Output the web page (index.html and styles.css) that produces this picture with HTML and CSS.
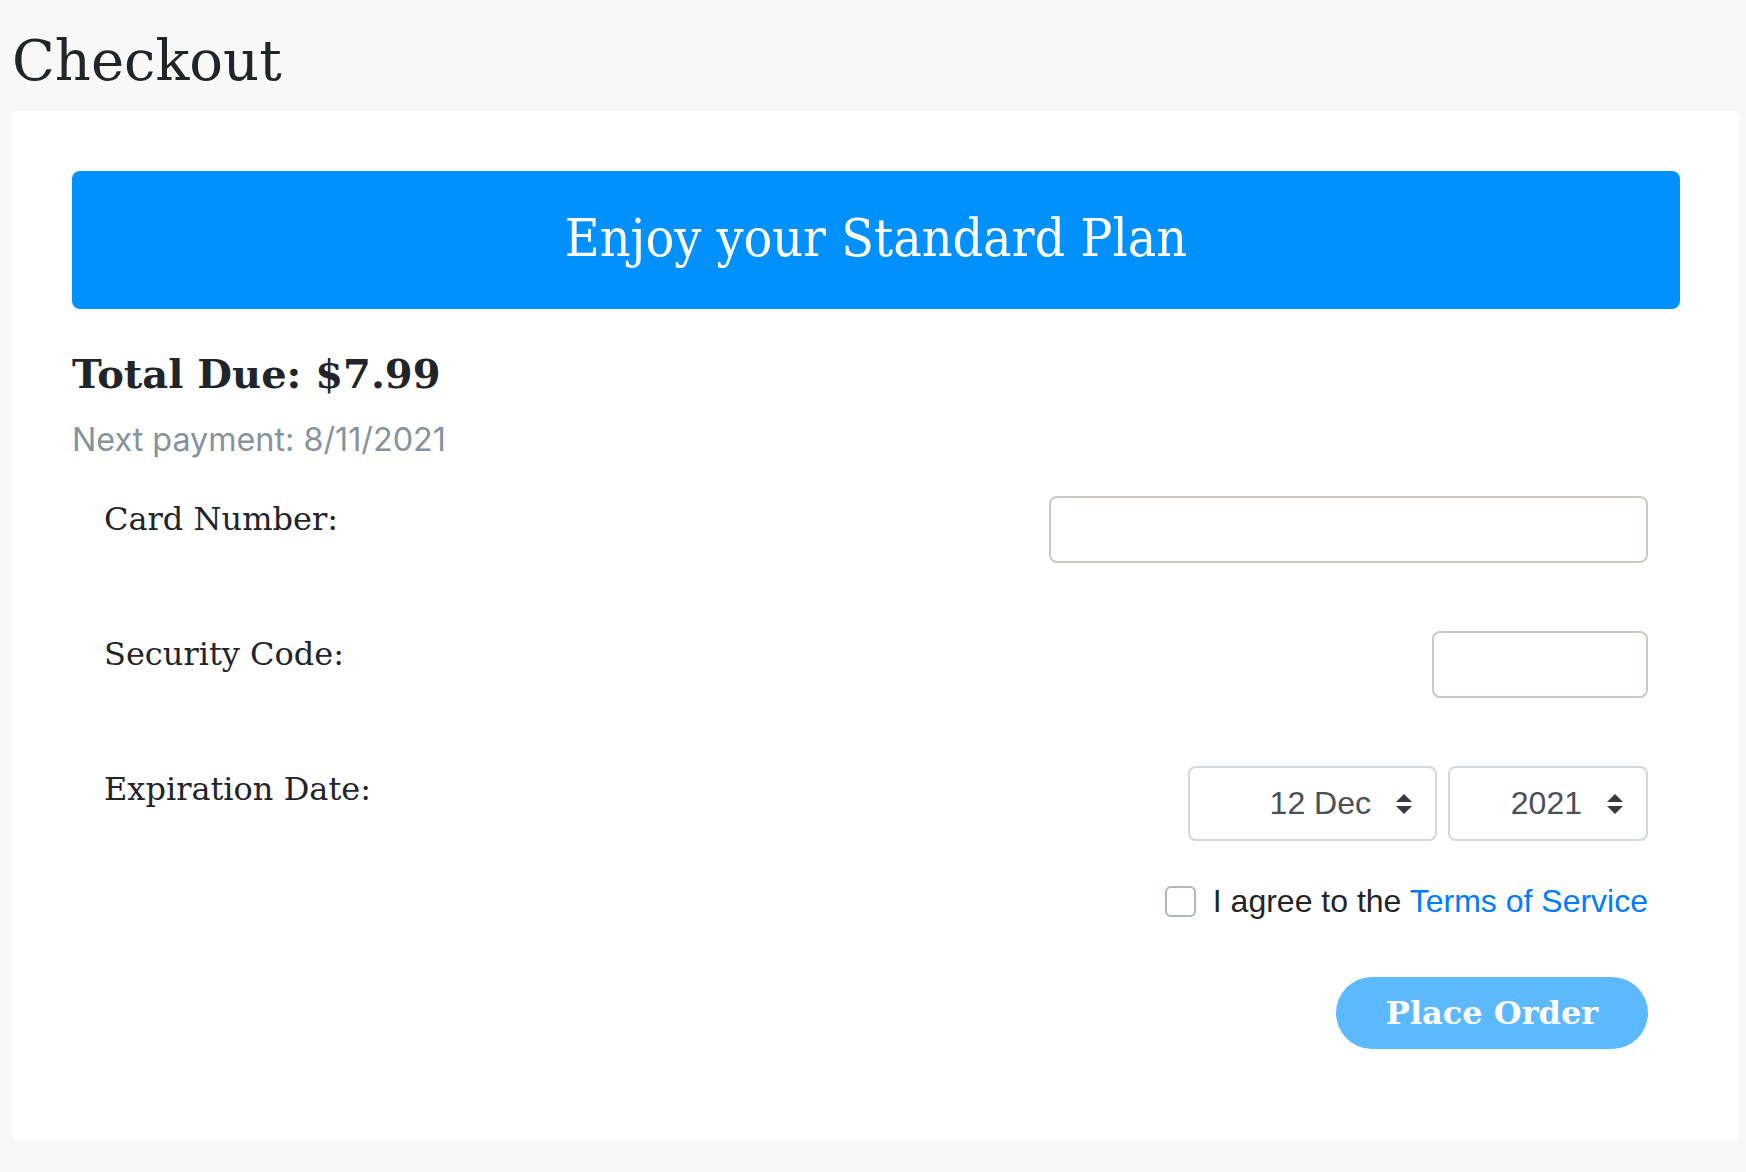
FILE: index.html
```html
<!DOCTYPE html>
<html lang="en">
<head>
<meta charset="utf-8">
<title>Checkout</title>
<link rel="stylesheet" href="styles.css">
</head>
<body>
<h1 class="page-title">Checkout</h1>
<main class="card">
  <div class="banner">Enjoy your Standard Plan</div>
  <h2 class="total">Total Due: $7.99</h2>
  <p class="next-payment">Next payment: 8/11/2021</p>
  <form class="form">
    <div class="form-row">
      <label class="form-label" for="card-number">Card Number:</label>
      <input class="text-input card-input" id="card-number" type="text">
    </div>
    <div class="form-row">
      <label class="form-label" for="security-code">Security Code:</label>
      <input class="text-input code-input" id="security-code" type="text">
    </div>
    <div class="form-row">
      <span class="form-label">Expiration Date:</span>
      <div class="date-selects">
        <div class="select select-month">
          <span class="select-value">12 Dec</span>
          <svg class="select-arrow" viewBox="0 0 4 5" width="16" height="20"><path fill="#343a40" d="M2 0L0 2h4zm0 5L0 3h4z"/></svg>
        </div>
        <div class="select select-year">
          <span class="select-value">2021</span>
          <svg class="select-arrow" viewBox="0 0 4 5" width="16" height="20"><path fill="#343a40" d="M2 0L0 2h4zm0 5L0 3h4z"/></svg>
        </div>
      </div>
    </div>
    <div class="terms-row">
      <input class="checkbox" type="checkbox" id="agree">
      <label class="terms-label" for="agree">I agree to the <a class="terms-link" href="#">Terms of Service</a></label>
    </div>
    <div class="actions">
      <button class="place-order" type="button">Place Order</button>
    </div>
  </form>
</main>
</body>
</html>
```
FILE: styles.css
```css
html, body {
  margin: 0;
  background: #f8f8f8;
}

body {
  padding: 28px 7px 32px 12px;
  color: #212529;
  font-family: "DejaVu Serif", serif;
}

.page-title {
  margin: 0 0 18px 0;
  font-size: 56px;
  font-weight: normal;
  line-height: normal;
  color: #212529;
}

.card {
  display: block;
  background: #ffffff;
  border-radius: 6px;
  padding: 60px 59px 91px 60px;
}

.banner {
  background: #0091ff;
  color: #ffffff;
  border-radius: 8px;
  text-align: center;
  font-size: 53.2px;
  font-stretch: condensed;
  line-height: 65px;
  padding: 35px 0 38px;
}

.total {
  margin: 41px 0 0;
  font-size: 40px;
  font-weight: bold;
  line-height: normal;
  color: #212529;
}

.next-payment {
  margin: 23px 0 0;
  font-family: "Inter", sans-serif;
  font-size: 32.3px;
  line-height: normal;
  color: #86939e;
}

.form {
  margin-top: 37px;
  padding: 0 32px;
}

.form-row {
  display: flex;
  justify-content: space-between;
  align-items: flex-start;
}

.form-row + .form-row {
  margin-top: 68px;
}

.form-label {
  padding-top: 4px;
  font-size: 32px;
  line-height: normal;
  color: #212529;
}

.text-input {
  box-sizing: border-box;
  border: 2px solid #ccc7c1;
  border-radius: 8px;
  background: #ffffff;
  margin: 0;
  font-size: 32px;
}

.card-input {
  width: 599px;
  height: 67px;
}

.code-input {
  width: 216px;
  height: 67px;
}

.date-selects {
  display: flex;
  gap: 11px;
}

.select {
  box-sizing: border-box;
  height: 75px;
  border: 2px solid #d3d8de;
  border-radius: 8px;
  display: flex;
  align-items: center;
  justify-content: flex-end;
  font-family: "Liberation Sans", Arial, sans-serif;
  font-size: 32px;
  color: #495057;
  padding-right: 23px;
}

.select-month {
  width: 249px;
}

.select-year {
  width: 200px;
}

.select-value {
  margin-right: 25px;
}

.select-arrow {
  display: block;
}

.terms-row {
  margin-top: 42px;
  display: flex;
  justify-content: flex-end;
  align-items: center;
  gap: 17px;
}

.checkbox {
  appearance: none;
  -webkit-appearance: none;
  box-sizing: border-box;
  width: 31px;
  height: 31px;
  margin: 0;
  border: 2px solid #adb5bd;
  border-radius: 6px;
  background: #ffffff;
}

.terms-label {
  font-family: "Liberation Sans", Arial, sans-serif;
  font-size: 32px;
  line-height: normal;
  color: #212529;
}

.terms-link {
  color: #007bff;
  text-decoration: none;
}

.actions {
  margin-top: 57px;
  display: flex;
  justify-content: flex-end;
}

.place-order {
  width: 312px;
  height: 72px;
  border: none;
  border-radius: 36px;
  background: #5cb8ff;
  color: #ffffff;
  font-family: "DejaVu Serif", serif;
  font-weight: bold;
  font-size: 32px;
  padding: 0;
}
```
